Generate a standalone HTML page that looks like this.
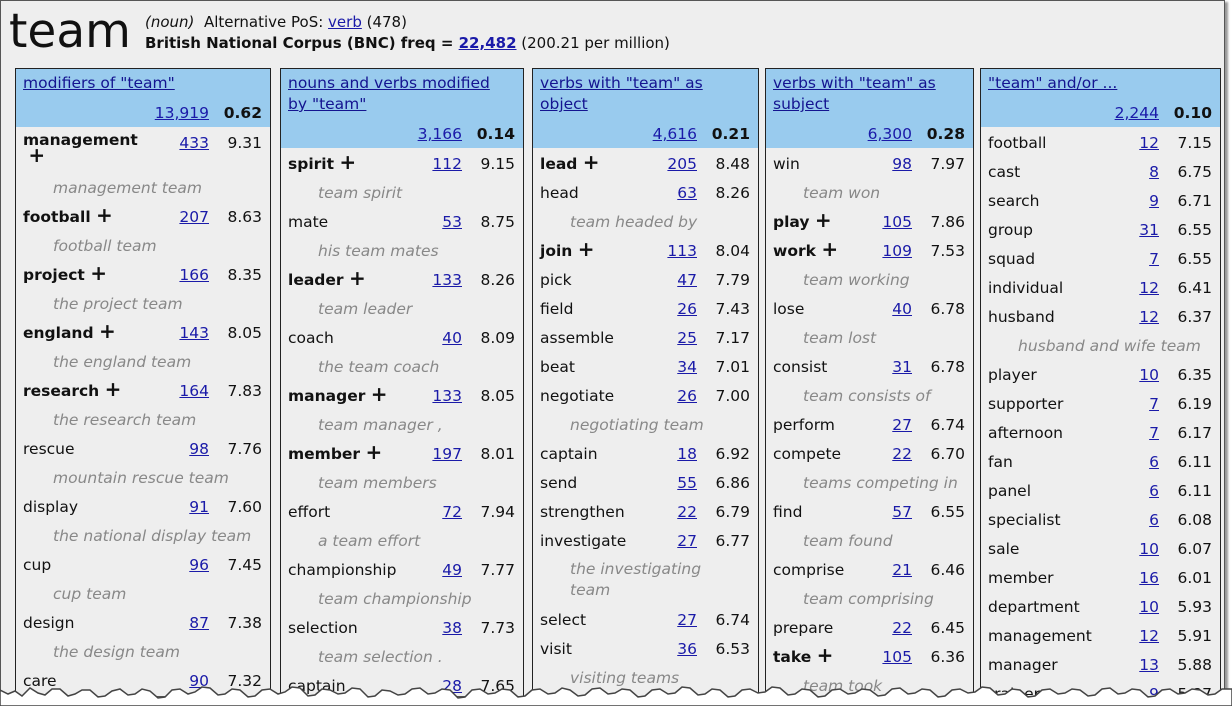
<!DOCTYPE html>
<html><head><meta charset="utf-8"><style>
body{margin:0;width:1232px;height:706px;overflow:hidden;background:#fff;font-family:"DejaVu Sans","Liberation Sans",sans-serif;position:relative}
#frame{position:absolute;left:0;top:0;width:1225px;height:697px;background:#eeeeee;border:1px solid #555;box-sizing:border-box;box-shadow:3px 2px 2px #999}
a{color:#1a1aa8;text-decoration:underline}
.col{position:absolute;top:68px;height:628px;border:1px solid #222;border-bottom:none;box-sizing:border-box;background:#eeeeee;font-size:15.5px;overflow:hidden}
.hd{position:absolute;left:0;right:0;top:0;background:#99cbee}
.t{position:absolute;left:7px;top:4px;line-height:21px;right:6px;white-space:nowrap}
.t a{color:#141490}
.r{position:absolute;left:0;right:0;height:22px;line-height:22px;white-space:nowrap;color:#111}
.n{position:absolute;left:7px}
.b{font-weight:bold}
.c{position:absolute;right:61px}
.s{position:absolute;right:8px}
.hs{font-weight:bold}
.g{position:absolute;left:37px;color:#888;font-style:italic}
.p{font-weight:bold;font-size:20px;line-height:10px}
</style></head><body>
<div id="frame"></div>
<div style="position:absolute;left:9px;top:4px;font-size:47px;line-height:56px;color:#111">team</div>
<div style="position:absolute;left:145px;top:12px;font-size:15px;line-height:21px;color:#111;white-space:nowrap"><i>(noun)</i>&nbsp;&nbsp;Alternative PoS: <a>verb</a> (478)<br><b>British National Corpus (BNC) freq = <a>22,482</a></b> (200.21 per million)</div>

<div class="col" style="left:15px;width:256px">
<div class="hd" style="height:58px"><div class="t"><a>modifiers of "team"</a></div>
<div class="r" style="top:33px"><a class="c">13,919</a><span class="s hs">0.62</span></div></div>
<div class="r" style="top:63px;height:40px"><span class="n b" style="line-height:17px">management<br>&nbsp;<span class="p">+</span></span><a class="c">433</a><span class="s">9.31</span></div>
<div class="r" style="top:108px"><span class="g">management team</span></div>
<div class="r" style="top:137px"><span class="n b">football <span class="p">+</span></span><a class="c">207</a><span class="s">8.63</span></div>
<div class="r" style="top:166px"><span class="g">football team</span></div>
<div class="r" style="top:195px"><span class="n b">project <span class="p">+</span></span><a class="c">166</a><span class="s">8.35</span></div>
<div class="r" style="top:224px"><span class="g">the project team</span></div>
<div class="r" style="top:253px"><span class="n b">england <span class="p">+</span></span><a class="c">143</a><span class="s">8.05</span></div>
<div class="r" style="top:282px"><span class="g">the england team</span></div>
<div class="r" style="top:311px"><span class="n b">research <span class="p">+</span></span><a class="c">164</a><span class="s">7.83</span></div>
<div class="r" style="top:340px"><span class="g">the research team</span></div>
<div class="r" style="top:369px"><span class="n">rescue</span><a class="c">98</a><span class="s">7.76</span></div>
<div class="r" style="top:398px"><span class="g">mountain rescue team</span></div>
<div class="r" style="top:427px"><span class="n">display</span><a class="c">91</a><span class="s">7.60</span></div>
<div class="r" style="top:456px"><span class="g">the national display team</span></div>
<div class="r" style="top:485px"><span class="n">cup</span><a class="c">96</a><span class="s">7.45</span></div>
<div class="r" style="top:514px"><span class="g">cup team</span></div>
<div class="r" style="top:543px"><span class="n">design</span><a class="c">87</a><span class="s">7.38</span></div>
<div class="r" style="top:572px"><span class="g">the design team</span></div>
<div class="r" style="top:601px"><span class="n">care</span><a class="c">90</a><span class="s">7.32</span></div>
</div>

<div class="col" style="left:280px;width:244px">
<div class="hd" style="height:79px"><div class="t"><a>nouns and verbs modified</a><br><a>by "team"</a></div>
<div class="r" style="top:54px"><a class="c">3,166</a><span class="s hs">0.14</span></div></div>
<div class="r" style="top:84px"><span class="n b">spirit <span class="p">+</span></span><a class="c">112</a><span class="s">9.15</span></div>
<div class="r" style="top:113px"><span class="g">team spirit</span></div>
<div class="r" style="top:142px"><span class="n">mate</span><a class="c">53</a><span class="s">8.75</span></div>
<div class="r" style="top:171px"><span class="g">his team mates</span></div>
<div class="r" style="top:200px"><span class="n b">leader <span class="p">+</span></span><a class="c">133</a><span class="s">8.26</span></div>
<div class="r" style="top:229px"><span class="g">team leader</span></div>
<div class="r" style="top:258px"><span class="n">coach</span><a class="c">40</a><span class="s">8.09</span></div>
<div class="r" style="top:287px"><span class="g">the team coach</span></div>
<div class="r" style="top:316px"><span class="n b">manager <span class="p">+</span></span><a class="c">133</a><span class="s">8.05</span></div>
<div class="r" style="top:345px"><span class="g">team manager ,</span></div>
<div class="r" style="top:374px"><span class="n b">member <span class="p">+</span></span><a class="c">197</a><span class="s">8.01</span></div>
<div class="r" style="top:403px"><span class="g">team members</span></div>
<div class="r" style="top:432px"><span class="n">effort</span><a class="c">72</a><span class="s">7.94</span></div>
<div class="r" style="top:461px"><span class="g">a team effort</span></div>
<div class="r" style="top:490px"><span class="n">championship</span><a class="c">49</a><span class="s">7.77</span></div>
<div class="r" style="top:519px"><span class="g">team championship</span></div>
<div class="r" style="top:548px"><span class="n">selection</span><a class="c">38</a><span class="s">7.73</span></div>
<div class="r" style="top:577px"><span class="g">team selection .</span></div>
<div class="r" style="top:606px"><span class="n">captain</span><a class="c">28</a><span class="s">7.65</span></div>
</div>

<div class="col" style="left:532px;width:227px">
<div class="hd" style="height:79px"><div class="t"><a>verbs with "team" as</a><br><a>object</a></div>
<div class="r" style="top:54px"><a class="c">4,616</a><span class="s hs">0.21</span></div></div>
<div class="r" style="top:84px"><span class="n b">lead <span class="p">+</span></span><a class="c">205</a><span class="s">8.48</span></div>
<div class="r" style="top:113px"><span class="n">head</span><a class="c">63</a><span class="s">8.26</span></div>
<div class="r" style="top:142px"><span class="g">team headed by</span></div>
<div class="r" style="top:171px"><span class="n b">join <span class="p">+</span></span><a class="c">113</a><span class="s">8.04</span></div>
<div class="r" style="top:200px"><span class="n">pick</span><a class="c">47</a><span class="s">7.79</span></div>
<div class="r" style="top:229px"><span class="n">field</span><a class="c">26</a><span class="s">7.43</span></div>
<div class="r" style="top:258px"><span class="n">assemble</span><a class="c">25</a><span class="s">7.17</span></div>
<div class="r" style="top:287px"><span class="n">beat</span><a class="c">34</a><span class="s">7.01</span></div>
<div class="r" style="top:316px"><span class="n">negotiate</span><a class="c">26</a><span class="s">7.00</span></div>
<div class="r" style="top:345px"><span class="g">negotiating team</span></div>
<div class="r" style="top:374px"><span class="n">captain</span><a class="c">18</a><span class="s">6.92</span></div>
<div class="r" style="top:403px"><span class="n">send</span><a class="c">55</a><span class="s">6.86</span></div>
<div class="r" style="top:432px"><span class="n">strengthen</span><a class="c">22</a><span class="s">6.79</span></div>
<div class="r" style="top:461px"><span class="n">investigate</span><a class="c">27</a><span class="s">6.77</span></div>
<div class="r" style="top:490px;line-height:21px"><span class="g">the investigating<br>team</span></div>
<div class="r" style="top:540px"><span class="n">select</span><a class="c">27</a><span class="s">6.74</span></div>
<div class="r" style="top:569px"><span class="n">visit</span><a class="c">36</a><span class="s">6.53</span></div>
<div class="r" style="top:598px"><span class="g">visiting teams</span></div>
</div>

<div class="col" style="left:765px;width:209px">
<div class="hd" style="height:79px"><div class="t"><a>verbs with "team" as</a><br><a>subject</a></div>
<div class="r" style="top:54px"><a class="c">6,300</a><span class="s hs">0.28</span></div></div>
<div class="r" style="top:84px"><span class="n">win</span><a class="c">98</a><span class="s">7.97</span></div>
<div class="r" style="top:113px"><span class="g">team won</span></div>
<div class="r" style="top:142px"><span class="n b">play <span class="p">+</span></span><a class="c">105</a><span class="s">7.86</span></div>
<div class="r" style="top:171px"><span class="n b">work <span class="p">+</span></span><a class="c">109</a><span class="s">7.53</span></div>
<div class="r" style="top:200px"><span class="g">team working</span></div>
<div class="r" style="top:229px"><span class="n">lose</span><a class="c">40</a><span class="s">6.78</span></div>
<div class="r" style="top:258px"><span class="g">team lost</span></div>
<div class="r" style="top:287px"><span class="n">consist</span><a class="c">31</a><span class="s">6.78</span></div>
<div class="r" style="top:316px"><span class="g">team consists of</span></div>
<div class="r" style="top:345px"><span class="n">perform</span><a class="c">27</a><span class="s">6.74</span></div>
<div class="r" style="top:374px"><span class="n">compete</span><a class="c">22</a><span class="s">6.70</span></div>
<div class="r" style="top:403px"><span class="g">teams competing in</span></div>
<div class="r" style="top:432px"><span class="n">find</span><a class="c">57</a><span class="s">6.55</span></div>
<div class="r" style="top:461px"><span class="g">team found</span></div>
<div class="r" style="top:490px"><span class="n">comprise</span><a class="c">21</a><span class="s">6.46</span></div>
<div class="r" style="top:519px"><span class="g">team comprising</span></div>
<div class="r" style="top:548px"><span class="n">prepare</span><a class="c">22</a><span class="s">6.45</span></div>
<div class="r" style="top:577px"><span class="n b">take <span class="p">+</span></span><a class="c">105</a><span class="s">6.36</span></div>
<div class="r" style="top:606px"><span class="g">team took</span></div>
</div>

<div class="col" style="left:980px;width:241px">
<div class="hd" style="height:58px"><div class="t"><a>"team" and/or ...</a></div>
<div class="r" style="top:33px"><a class="c">2,244</a><span class="s hs">0.10</span></div></div>
<div class="r" style="top:63px"><span class="n">football</span><a class="c">12</a><span class="s">7.15</span></div>
<div class="r" style="top:92px"><span class="n">cast</span><a class="c">8</a><span class="s">6.75</span></div>
<div class="r" style="top:121px"><span class="n">search</span><a class="c">9</a><span class="s">6.71</span></div>
<div class="r" style="top:150px"><span class="n">group</span><a class="c">31</a><span class="s">6.55</span></div>
<div class="r" style="top:179px"><span class="n">squad</span><a class="c">7</a><span class="s">6.55</span></div>
<div class="r" style="top:208px"><span class="n">individual</span><a class="c">12</a><span class="s">6.41</span></div>
<div class="r" style="top:237px"><span class="n">husband</span><a class="c">12</a><span class="s">6.37</span></div>
<div class="r" style="top:266px"><span class="g">husband and wife team</span></div>
<div class="r" style="top:295px"><span class="n">player</span><a class="c">10</a><span class="s">6.35</span></div>
<div class="r" style="top:324px"><span class="n">supporter</span><a class="c">7</a><span class="s">6.19</span></div>
<div class="r" style="top:353px"><span class="n">afternoon</span><a class="c">7</a><span class="s">6.17</span></div>
<div class="r" style="top:382px"><span class="n">fan</span><a class="c">6</a><span class="s">6.11</span></div>
<div class="r" style="top:411px"><span class="n">panel</span><a class="c">6</a><span class="s">6.11</span></div>
<div class="r" style="top:440px"><span class="n">specialist</span><a class="c">6</a><span class="s">6.08</span></div>
<div class="r" style="top:469px"><span class="n">sale</span><a class="c">10</a><span class="s">6.07</span></div>
<div class="r" style="top:498px"><span class="n">member</span><a class="c">16</a><span class="s">6.01</span></div>
<div class="r" style="top:527px"><span class="n">department</span><a class="c">10</a><span class="s">5.93</span></div>
<div class="r" style="top:556px"><span class="n">management</span><a class="c">12</a><span class="s">5.91</span></div>
<div class="r" style="top:585px"><span class="n">manager</span><a class="c">13</a><span class="s">5.88</span></div>
<div class="r" style="top:614px"><span class="n">trainer</span><a class="c">9</a><span class="s">5.87</span></div>
</div>

<svg style="position:absolute;left:0;top:676px;z-index:10" width="1232" height="30" viewBox="0 676 1232 30">
<polygon fill="#fff" stroke="#444" stroke-width="1.5" points="0,690 8,694 15,691 22,696 30,688 38,693 45,695 52,689 60,689 68,696 75,694 82,690 90,690 98,697 105,696 112,691 120,689 128,695 135,694 142,689 150,691 158,698 165,697 172,690 180,689 188,694 195,692 202,687 210,688 218,695 225,694 232,689 240,690 248,697 255,696 262,690 270,689 278,694 285,692 292,687 300,688 308,696 315,695 322,689 330,690 338,694 345,693 352,688 360,689 368,697 375,696 382,690 390,691 398,695 405,694 412,689 420,688 428,694 435,693 442,689 450,690 458,698 465,697 472,690 480,689 488,694 495,693 502,689 510,690 518,697 525,696 532,690 540,689 548,694 555,693 562,688 570,690 578,696 585,695 592,689 600,688 608,694 615,693 622,689 630,690 638,697 645,696 652,690 660,689 668,694 675,693 682,687 690,688 698,695 705,694 712,689 720,690 728,697 735,696 742,690 750,689 758,693 765,692 772,687 780,688 788,695 795,694 802,689 810,690 818,697 825,696 832,690 840,689 848,694 855,693 862,689 870,690 878,696 885,695 892,689 900,688 908,694 915,693 922,689 930,690 938,697 945,696 952,690 960,689 968,693 975,692 982,687 990,688 998,695 1005,694 1012,689 1020,690 1028,697 1035,696 1042,690 1050,689 1058,694 1065,693 1072,689 1080,690 1088,696 1095,695 1102,689 1110,688 1118,694 1125,693 1132,689 1140,690 1148,697 1155,696 1162,690 1170,689 1178,694 1185,693 1192,689 1200,690 1208,695 1215,694 1222,689 1232,689 1232,706 0,706"/>
</svg>
</body></html>
